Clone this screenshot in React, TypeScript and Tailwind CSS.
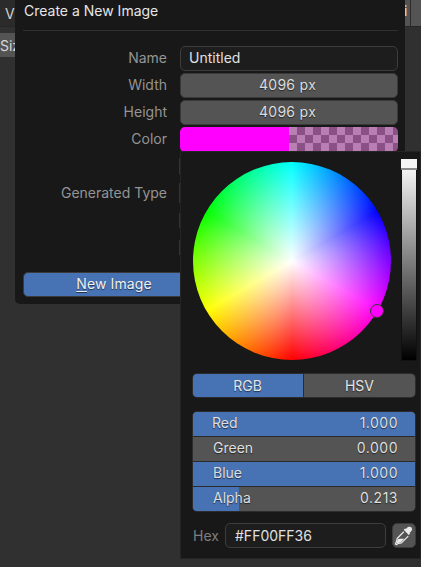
import React from 'react';

const sans = "font-['Inter','Noto_Sans',sans-serif]";
const shadow = '[text-shadow:0_1px_1px_#0000008c]';

const Label = ({ text }: { text: string }) => (
  <span className="w-[157px] shrink-0 pb-[2px] pr-[13px] text-right text-[14px] text-[#949494]">{text}</span>
);

const Row = ({ label, children }: { label: string; children: React.ReactNode }) => (
  <div className="flex h-[25px] items-center">
    <Label text={label} />
    {children}
  </div>
);

const NumberField = ({ value }: { value: string }) => (
  <div className={`flex h-full flex-1 items-center justify-center rounded-[5px] border border-[#3a3a3a] bg-[#545454] pb-[2px] pr-[3px] text-[14px] tracking-[0.3px] text-[#dcdcdc] ${shadow}`}>
    {value}
  </div>
);

const Dash = ({ top, height }: { top: string; height: string }) => (
  <div className={`ml-[-1px] w-px bg-[#333333] ${top} ${height}`} />
);

const Channel = ({ name, value, fill, inset }: { name: string; value: string; fill: string; inset: string }) => (
  <div className="relative flex h-[25px] items-center justify-between overflow-hidden border-b border-[#2a2a2a] bg-[#545454] pb-[3px] pr-[17px] last:h-[24px] last:border-b-0">
    <div className={`absolute inset-y-0 left-0 bg-[#4772b3] ${fill}`} />
    <span className={`relative text-[14px] text-[#dedede] ${inset} ${shadow}`}>{name}</span>
    <span className={`relative text-[14px] tracking-[0.5px] text-[#dedede] ${shadow}`}>{value}</span>
  </div>
);

const Eyedropper = () => (
  <svg width="21" height="21" viewBox="0 0 18 18" fill="none">
    <path d="M11 2.6c1-1.3 2.7-1.6 3.8-.6 1.1 1.1.8 2.8-.5 3.8l-1 .8.6.7-1.2 1.2-4.4-4.4 1.2-1.2.7.6z" fill="#ececec" />
    <path d="M8.4 5.8 2.7 11.6l-.6 2.6-.9 2 .6.6 2-.9 2.6-.6 5.8-5.7" stroke="#ececec" strokeWidth="1" strokeLinejoin="round" />
    <path d="M3.2 12.2 2.2 15.8 5.8 14.8l3-3H5z" fill="#ececec" />
  </svg>
);

export default function App() {
  return (
    <div className={`relative h-[567px] w-[421px] overflow-hidden bg-[#303030] ${sans}`}>
      {/* editor behind the popups */}
      <div className="flex h-[27px] justify-between border-b border-[#262626] bg-[#2b2b2b]">
        <span className="pl-[5px] pt-[3px] text-[14px] text-[#d0d0d0]">V</span>
        <div className="flex gap-px">
          <div className="w-[6px] overflow-hidden bg-[#545454] text-[14px] text-[#e0e0e0]">i</div>
          <div className="w-[10px] bg-[#545454]" />
        </div>
      </div>
      <div className="mt-[6px] flex h-[24px] w-[15px] items-center overflow-hidden bg-[#545454] text-[14px] text-[#d8d8d8]">
        Siz
      </div>

      {/* Create a New Image dialog */}
      <div className="absolute left-[15px] top-0 flex h-[304px] w-[390px] flex-col rounded-b-[5px] bg-[#181818] pl-[8px] pr-[7px]">
        <div className="flex h-[31px] shrink-0 items-start border-b border-[#303030] pl-px text-[14px] text-[#e6e6e6]">
          Create a New Image
        </div>
        <div className="mt-[15px] flex flex-col gap-[2px]">
          <Row label="Name">
            <div className="flex h-full flex-1 items-center rounded-[5px] border border-[#3d3d3d] bg-[#1d1d1d] pb-[2px] pl-[8px] text-[14px] text-[#e0e0e0]">
              Untitled
            </div>
          </Row>
          <Row label="Width">
            <NumberField value="4096 px" />
          </Row>
          <Row label="Height">
            <NumberField value="4096 px" />
          </Row>
          <Row label="Color">
            <div className="flex h-full flex-1 overflow-hidden rounded-[5px]">
              <div className="w-1/2 bg-[#ff00ff]" />
              <div className="w-1/2 bg-[repeating-conic-gradient(#8a5187_0_25%,#b97fb5_0_50%)] bg-[length:16px_16px]" />
            </div>
          </Row>
        </div>
        <div className="relative flex-1">
          <div className="absolute left-0 top-[31px] w-[157px] pr-[13px] text-right text-[14px] leading-[20px] text-[#949494]">
            Generated Type
          </div>
          <div className="ml-[157px] flex flex-col">
            <Dash top="mt-[6px]" height="h-[16px]" />
            <Dash top="mt-[9px]" height="h-[20px]" />
            <Dash top="mt-[10px]" height="h-[15px]" />
            <Dash top="mt-[12px]" height="h-[15px]" />
          </div>
        </div>
        <div className="mb-[7px] flex h-[25px] shrink-0 items-center justify-center rounded-[5px] border border-[#3a3a3a] bg-[#4772b3] pb-[2px] pr-[193px] text-[14px] tracking-[0.1px] text-[#f0f0f0]">
          <span className={shadow}>
            <span className="underline underline-offset-2">N</span>ew Image
          </span>
        </div>
      </div>

      {/* colour picker popover */}
      <div className="absolute left-[180px] top-[151px] flex h-[408px] w-[241px] flex-col border border-[#242424] bg-[#181818] pl-[11px] pr-[3px]">
        <div className="mt-[7px] flex h-[202px] items-start justify-between">
          <div className="relative ml-px mt-[3px] h-[198px] w-[198px] rounded-full bg-[radial-gradient(closest-side,#ffffff,#ffffff00),conic-gradient(#00ffff,#0000ff,#ff00ff,#ff0000,#ffff00,#00ff00,#00ffff)]">
            <div className="absolute left-[177px] top-[142px] h-[14px] w-[14px] rounded-full border border-[#3a3a3a] bg-[#ff00ff]" />
          </div>
          <div className="relative h-[202px] w-[16px] border border-[#111111] bg-[linear-gradient(#ffffff,#000000)]">
            <div className="absolute -inset-x-px top-[-1px] h-[11px] border-b-2 border-[#8a8a8a] bg-[#f4f4f4]" />
          </div>
        </div>
        <div className="mt-[12px] flex h-[25px] w-[224px] overflow-hidden rounded-[5px] border border-[#2c2c2c] text-[14px] text-[#e4e4e4]">
          <div className={`flex w-[111px] items-center justify-center border-r border-[#2c2c2c] bg-[#4772b3] pb-px pr-px ${shadow}`}>RGB</div>
          <div className={`flex flex-1 items-center justify-center bg-[#545454] pb-px ${shadow}`}>HSV</div>
        </div>
        <div className="mt-[13px] flex w-[224px] flex-col overflow-hidden rounded-[5px] border border-[#2c2c2c]">
          <Channel name="Red" value="1.000" fill="w-full" inset="pl-[19px]" />
          <Channel name="Green" value="0.000" fill="w-0" inset="pl-[20px]" />
          <Channel name="Blue" value="1.000" fill="w-full" inset="pl-[20px]" />
          <Channel name="Alpha" value="0.213" fill="w-[46px]" inset="pl-[20px]" />
        </div>
        <div className="mt-[11px] flex h-[25px] w-[224px] items-center">
          <span className="w-[33px] pb-px pl-px text-[14px] text-[#7f7f7f]">Hex</span>
          <div className="flex h-full w-[161px] items-center rounded-[5px] border border-[#3d3d3d] bg-[#1d1d1d] pb-px pl-[9px] text-[14px] text-[#e0e0e0]">
            #FF00FF36
          </div>
          <div className="ml-[6px] flex h-full w-[24px] items-center justify-center rounded-[5px] border border-[#3a3a3a] bg-[#545454]">
            <Eyedropper />
          </div>
        </div>
      </div>
    </div>
  );
}
